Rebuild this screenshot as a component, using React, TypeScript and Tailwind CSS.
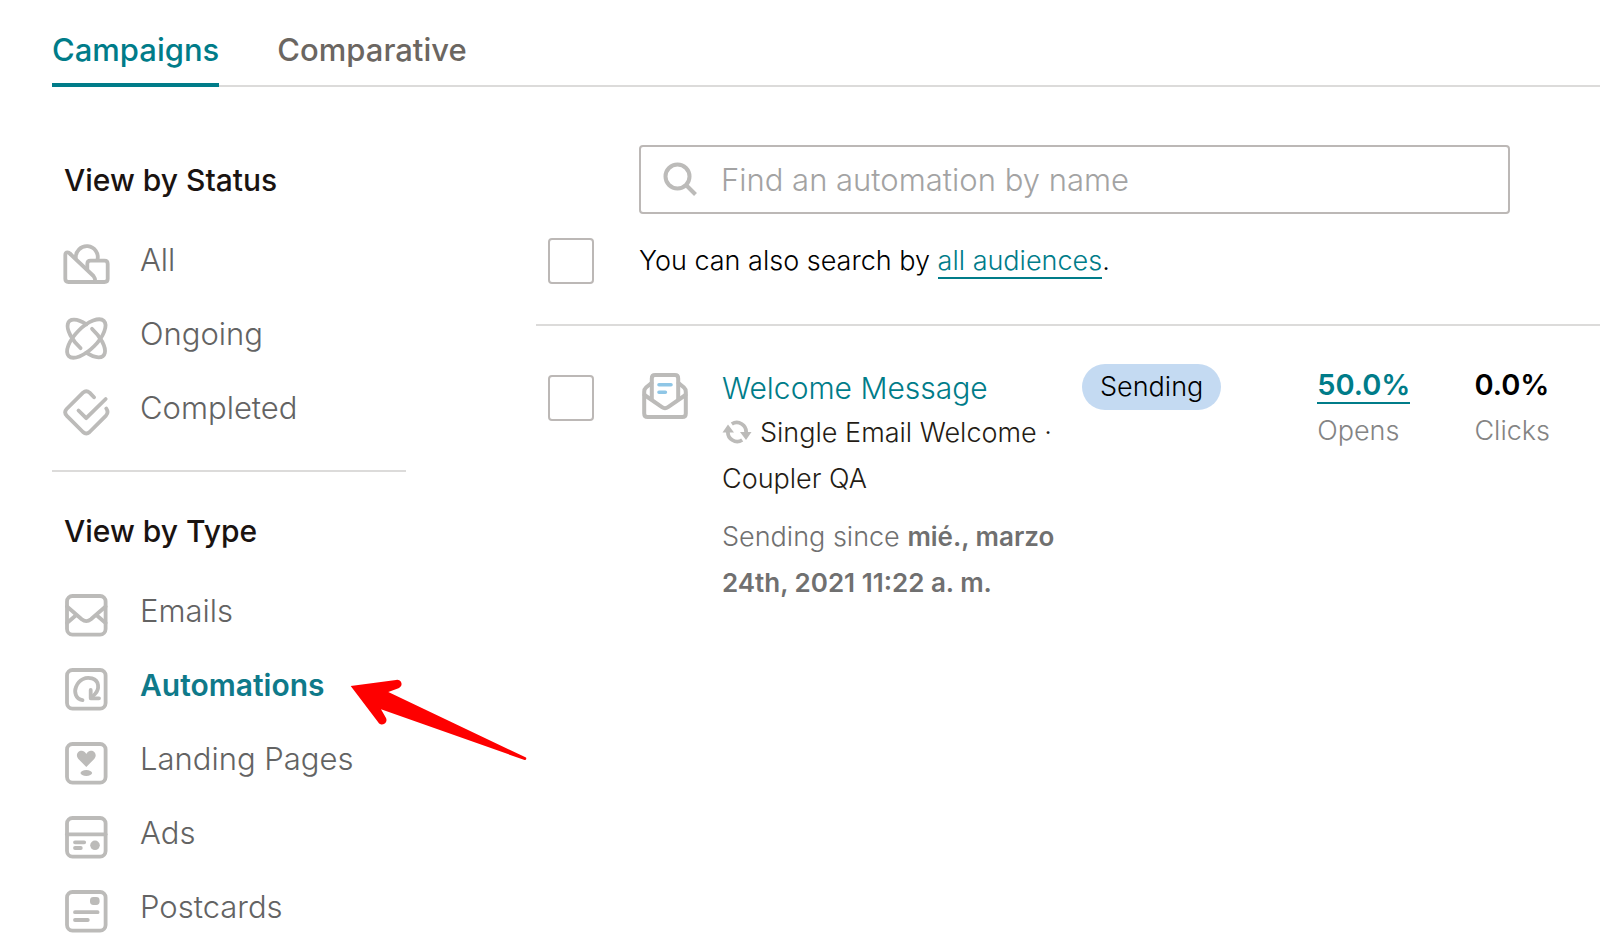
import type { ReactNode } from 'react';

interface NavItem {
  label: string;
  icon: ReactNode;
  active?: boolean;
}

const frame = <rect x="5" y="5" width="38.6" height="38.6" rx="5.5" />;

const statusItems: NavItem[] = [
  {
    label: 'All',
    icon: (
      <>
        <path d="M8.3 14 L31.5 36 Q33.3 38 33.3 42" />
        <path d="M33 42 H6.5 Q3.3 42 3.3 38.8 V15 Q3.3 12.4 5.6 12.4 Q7 12.4 8.3 14" />
        <path d="M25.3 29 V24 Q25.3 20.7 28.6 20.7 H42.4 Q45.7 20.7 45.7 24 V38.7 Q45.7 42 42.4 42 H33" />
        <path d="M13.8 18 A11 11 0 1 1 35.4 20" />
      </>
    ),
  },
  {
    label: 'Ongoing',
    icon: (
      <>
        <ellipse cx="24.3" cy="24.5" rx="24.8" ry="11" transform="rotate(-45 24.3 24.5)" />
        <g transform="translate(24.3 24.5) rotate(45)">
          <path d="M-10 -10 A24.8 11 0 0 0 2.8 10.9" />
          <path d="M10 10 A24.8 11 0 0 0 -2.8 -10.9" />
        </g>
      </>
    ),
  },
  {
    label: 'Completed',
    icon: (
      <>
        <path d="M32 9.3 L27.6 4.6 Q24.3 1.7 21 4.6 L4.6 21 Q1.7 24.3 4.6 27.6 L21 44 Q24.3 46.9 27.6 44 L44 27.6 Q46.9 24.3 44.3 20.5" />
        <path d="M16.5 22.5 L24.2 30.2 L43.7 11" />
      </>
    ),
  },
];

const typeItems: NavItem[] = [
  {
    label: 'Emails',
    icon: (
      <>
        {frame}
        <path d="M5 15.5 L19.7 28.3 Q24.3 32 28.9 28.3 L43.6 15.5" />
        <path d="M5 32 L14 24.3" />
        <path d="M43.6 32 L34.6 24.3" />
      </>
    ),
  },
  {
    label: 'Automations',
    active: true,
    icon: (
      <>
        {frame}
        <path d="M20.5 35.2 C13.5 34 12 27 14 22 C17 14 24 11.8 30 13.4 C37.5 15.6 37.6 24 33 29 L29 33" />
        <path d="M28.7 25 V33.3 H37" />
      </>
    ),
  },
  {
    label: 'Landing Pages',
    icon: (
      <>
        {frame}
        <g fill="currentColor" stroke="none">
          <path d="M24.3 28 L16.4 20 C12.8 15.8 16.4 11.2 20 11.7 C22.4 12 23.6 13.4 24.3 15 C25 13.4 26.2 12 28.6 11.7 C32.2 11.2 35.8 15.8 32.2 20 Z" />
          <ellipse cx="24.3" cy="34" rx="5.8" ry="2.9" />
        </g>
      </>
    ),
  },
  {
    label: 'Ads',
    icon: (
      <>
        {frame}
        <path d="M5 21.3 H43.6" />
        <path d="M13 29.3 H22.2 M13 35 H18.8" />
        <circle cx="33" cy="32.3" r="4.8" fill="currentColor" stroke="none" />
      </>
    ),
  },
  {
    label: 'Postcards',
    icon: (
      <>
        {frame}
        <rect x="28" y="10" width="9.6" height="8" rx="3.4" fill="currentColor" stroke="none" />
        <path d="M13 25.2 H35.6 M13 33 H25.8" />
      </>
    ),
  },
];

function NavIcon({ children }: { children: ReactNode }) {
  return (
    <svg
      className="size-12 shrink-0 text-[#bcbbb9]"
      viewBox="0 0 48 48"
      fill="none"
      stroke="currentColor"
      strokeWidth={3.8}
      strokeLinecap="round"
      strokeLinejoin="round"
      aria-hidden="true"
    >
      {children}
    </svg>
  );
}

function Pointer() {
  return (
    <svg className="absolute left-full top-3 ml-6 h-[84px] w-[180px]" viewBox="0 0 180 84" fill="#fe0000" aria-hidden="true">
      <path d="M1.7 9 L47 3 A4.2 4.2 0 0 1 49.5 11.2 L39.3 15 L177 80.6 Q178 82.6 175.6 83 L32 32.3 L37 41 A4.2 4.2 0 0 1 29 45 Z" />
    </svg>
  );
}

function NavGroup({ title, items }: { title: string; items: NavItem[] }) {
  return (
    <section className="px-3">
      <h2 className="text-[30px] leading-10 font-medium text-[#1a1311]">{title}</h2>
      <ul className="mt-10 -ml-0.5 flex flex-col gap-[26px]">
        {items.map((item) => (
          <li key={item.label} className="flex">
            <a href="#" className="relative flex items-start gap-[30px] whitespace-nowrap">
              <NavIcon>{item.icon}</NavIcon>
              <span
                className={
                  item.active
                    ? 'text-[30px] leading-10 font-semibold text-[#0f7a8a]'
                    : 'text-[31px] leading-10 font-light text-[#636363]'
                }
              >
                {item.label}
              </span>
              {item.active && <Pointer />}
            </a>
          </li>
        ))}
      </ul>
    </section>
  );
}

function Checkbox({ label }: { label: string }) {
  return (
    <input
      type="checkbox"
      aria-label={label}
      className="size-[46px] shrink-0 appearance-none rounded-sm border-2 border-[#bcb8b6] bg-white checked:bg-[#007c89]"
    />
  );
}

function OpenEnvelope() {
  return (
    <svg className="size-12 shrink-0" viewBox="0 0 48 48" fill="none" stroke="#bcbbb9" strokeWidth={4} strokeLinecap="round" strokeLinejoin="round" aria-hidden="true">
      <path d="M10.5 11 L5 15.5 Q3.2 17 3.2 20 V41.5 Q3.2 45 6.7 45 H41.3 Q44.8 45 44.8 41.5 V20 Q44.8 17 43 15.5 L37.5 11" />
      <path d="M3.5 23 L21 35.2 Q24 37.2 27 35.2 L44.5 23" />
      <path d="M10.8 27 V6.4 Q10.8 3 14.2 3 H33.8 Q37.2 3 37.2 6.4 V27" />
      <path d="M18 12.7 H30 M18 20.3 H24.4" stroke="#8fc6e6" strokeWidth={3.6} />
    </svg>
  );
}

function RefreshIcon() {
  return (
    <svg className="mr-2 inline-block h-6 w-[30px] align-[-2px]" viewBox="0 0 30 24" fill="none" stroke="#bcbbb9" strokeWidth={3.8} aria-hidden="true">
      <path d="M6 11 A9.3 9.3 0 0 0 20.2 20" />
      <path d="M9.8 4 A9.3 9.3 0 0 1 24 13" />
      <path d="M0.5 12.5 L6 4.5 L12 12.5 Z M18 12 L24 20 L29.5 12 Z" fill="#bcbbb9" stroke="none" />
    </svg>
  );
}

export default function App() {
  return (
    <div className="overflow-x-hidden bg-white pl-[52px] pb-2 font-['Inter','Liberation_Sans',sans-serif]">
      <nav className="flex gap-[58px] border-b-2 border-[#dcdbda] pt-[26px] text-[31px] leading-[48px] font-medium">
        <a href="#" className="-mb-0.5 border-b-4 border-[#007c89] pb-[9px] text-[#007c89]">
          Campaigns
        </a>
        <a href="#" className="text-[#6b6661]">
          Comparative
        </a>
      </nav>

      <div className="flex">
        <aside className="w-[354px] shrink-0 pt-[73px]">
          <NavGroup title="View by Status" items={statusItems} />
          <hr className="mt-[34px] mb-[39px] border-t-2 border-[#dcdbda]" />
          <NavGroup title="View by Type" items={typeItems} />
        </aside>

        <main className="ml-[130px] min-w-0 flex-1 pt-[58px]">
          <div className="mr-[90px] ml-[103px] flex h-[69px] items-center gap-[22px] rounded-sm border-2 border-[#bcb8b6] px-[22px]">
            <svg className="size-9 shrink-0" viewBox="0 0 36 36" fill="none" stroke="#bcbbb9" strokeWidth={4} aria-hidden="true">
              <circle cx="14.5" cy="14.5" r="12" />
              <path d="M23 23 L32.5 32.5" />
            </svg>
            <input
              type="text"
              aria-label="Find an automation by name"
              placeholder="Find an automation by name"
              className="min-w-0 flex-1 text-[31px] leading-10 font-light outline-none placeholder:text-[#a3a3a3]"
            />
          </div>
          <div className="mt-6 flex items-center gap-[45px] pl-3">
            <Checkbox label="Select all campaigns" />
            <p className="text-[27px] leading-[46px] font-light text-black">
              You can also search by{' '}
              <a href="#" className="border-b-2 border-[#007c89] text-[#007c89]">
                all audiences
              </a>
              .
            </p>
          </div>

          <ul className="mt-10 border-t-2 border-[#dcdbda]">
            <li className="flex items-start pt-9 pr-[50px] pl-3">
              <div className="mt-[13px] flex">
                <Checkbox label="Select Welcome Message" />
              </div>
              <div className="mt-2.5 ml-[47px] flex">
                <OpenEnvelope />
              </div>
              <div className="mt-1 ml-[33px] w-[346px] shrink-0 text-[27px] leading-[46px] font-light text-[#241c15]">
                <a href="#" className="block text-[30px] leading-[44px] text-[#007c89]">
                  Welcome Message
                </a>
                <p>
                  <RefreshIcon />
                  Single Email Welcome ·
                  <br />
                  Coupler QA
                </p>
                <p className="mt-3 text-[#707070]">
                  Sending since{' '}
                  <strong className="text-[26px] font-semibold">
                    mié., marzo
                    <br />
                    24th, 2021 11:22 a. m.
                  </strong>
                </p>
              </div>
              <span className="mt-0.5 ml-3.5 rounded-full bg-[#c4daf2] px-[18px] text-[27px] leading-[46px] font-light text-black">
                Sending
              </span>
              <dl className="ml-auto flex gap-16 text-[27px] leading-[46px] font-light text-[#848484]">
                <div className="flex flex-col-reverse items-start">
                  <dt>Opens</dt>
                  <dd className="text-[29px] font-semibold text-[#007c89]">
                    <a href="#" className="border-b-2 border-[#007c89]">
                      50.0%
                    </a>
                  </dd>
                </div>
                <div className="flex flex-col-reverse items-start">
                  <dt>Clicks</dt>
                  <dd className="text-[29px] font-semibold text-black">0.0%</dd>
                </div>
              </dl>
            </li>
          </ul>
        </main>
      </div>
    </div>
  );
}
